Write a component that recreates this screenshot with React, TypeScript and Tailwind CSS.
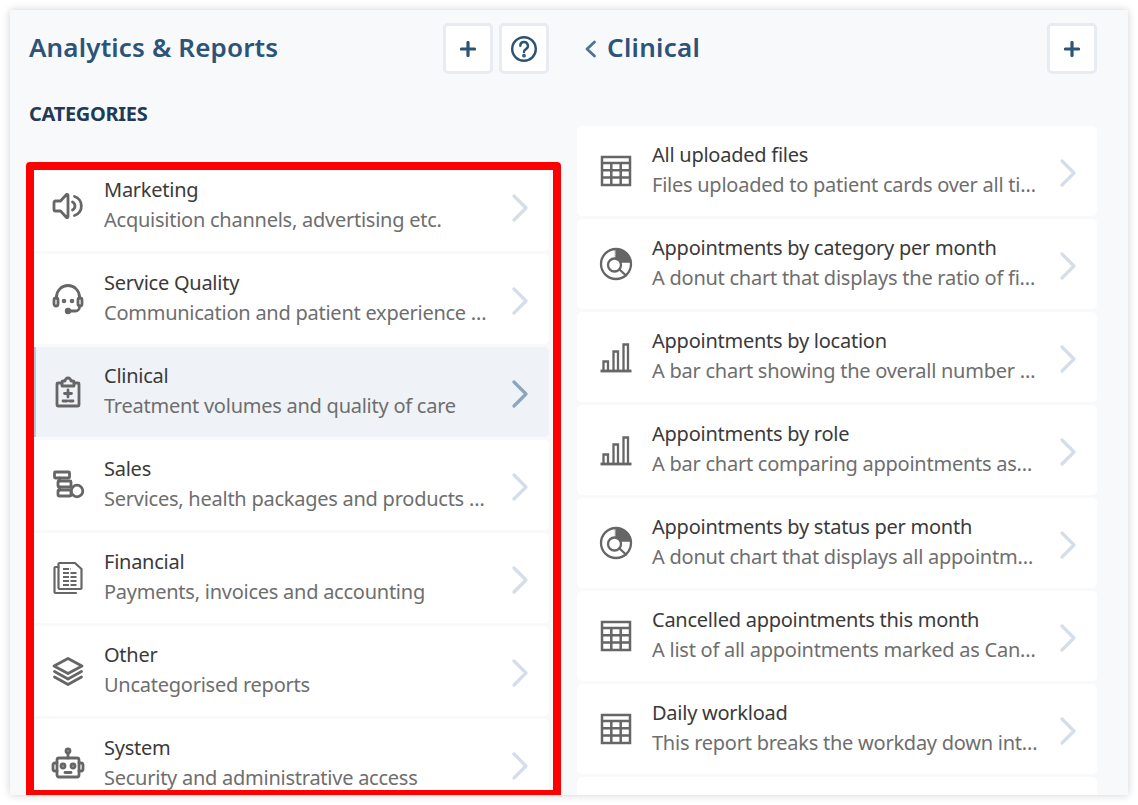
import React from "react";

const S = { fill: "none", stroke: "#666", strokeWidth: 2.8, strokeLinecap: "round" as const, strokeLinejoin: "round" as const };

function Ico({ children }: { children: React.ReactNode }) {
  return (
    <svg width="34" height="34" viewBox="0 0 34 34" {...S}>
      {children}
    </svg>
  );
}

const Speaker = () => (
  <Ico>
    <path d="M3 13.500a1.500 1.500 0 0 1 1.500-1.500H9.500L15.500 5.500a1 1 0 0 1 1.500 .8V27.700a1 1 0 0 1-1.500 .8L9.500 22H4.500A1.500 1.500 0 0 1 3 20.500Z" />
    <path d="M21.500 13a4.500 4.500 0 0 1 0 8" />
    <path d="M23.500 7.500a10 10 0 0 1 0 19" />
  </Ico>
);
const Headset = () => (
  <Ico>
    <path d="M5.500 16V15a11.500 11.500 0 0 1 23 0v1" />
    <rect x="3" y="16" width="4" height="8" rx="2" />
    <rect x="27" y="16" width="4" height="8" rx="2" />
    <path d="M28.500 24v1a4 4 0 0 1-4 4H19" />
    <circle cx="17" cy="29" r="1.800" fill="#666" />
    <circle cx="13" cy="19" r=".9" fill="#666" />
    <circle cx="21" cy="19" r=".9" fill="#666" />
  </Ico>
);
const Clipboard = () => (
  <Ico>
    <path d="M11 8H7a1 1 0 0 0-1 1V30a1 1 0 0 0 1 1H27a1 1 0 0 0 1-1V9a1 1 0 0 0-1-1H23" />
    <path d="M11 11V7a1 1 0 0 1 1-1h2a3 3 0 0 1 6 0h2a1 1 0 0 1 1 1v4Z" />
    <path d="M17 15v7M13.500 18.500h7M12 26h4M18.500 26h3.500" />
  </Ico>
);
const Stack = () => (
  <Ico>
    <rect x="3.500" y="4" width="15" height="6" rx="1" />
    <rect x="7" y="13" width="13" height="6" rx="1" />
    <rect x="7" y="22" width="13" height="6" rx="1" />
    <path d="M8.500 10v3M8.500 19v3" />
    <circle cx="26" cy="23" r="5.800" />
  </Ico>
);
const Docs = () => (
  <Ico>
    <path d="M7.500 6H4.500a1 1 0 0 0-1 1V31a1 1 0 0 0 1 1H25" strokeWidth="2.200" />
    <path d="M7.500 3a1 1 0 0 1 1-1H24l6.500 6V27a1 1 0 0 1-1 1H8.500a1 1 0 0 1-1-1Z" strokeWidth="2.200" />
    <path d="M12 8h8M12 12h14M12 16h14M12 20h14M12 24h14" strokeWidth="2" strokeDasharray="6 1.500" strokeLinecap="butt" />
  </Ico>
);
const Layers = () => (
  <Ico>
    <path d="M17 4.500 31 12 17 19.500 3 12Z" />
    <path d="M3.500 17.500 17 25 30.500 17.500" />
    <path d="M3.500 23 17 30.500 30.500 23" />
  </Ico>
);
const Robot = () => (
  <Ico>
    <circle cx="17" cy="4" r="2" />
    <path d="M17 6v5" />
    <rect x="6" y="11" width="22" height="19" rx="2" />
    <path d="M6 16H4a2 2 0 0 0-2 2v4a2 2 0 0 0 2 2h2M28 16h2a2 2 0 0 1 2 2v4a2 2 0 0 1-2 2h-2" />
    <circle cx="12" cy="19" r="2" />
    <circle cx="22" cy="19" r="2" />
    <path d="M14 25.500h6" />
  </Ico>
);
const Table = () => (
  <Ico>
    <path d="M3 3h28v28H3Z M3 9h28 M3 16.300h28 M3 23.600h28 M12.300 9v22 M21.700 9v22" strokeLinecap="butt" strokeLinejoin="miter" strokeWidth="2.500" />
  </Ico>
);
const Donut = () => (
  <Ico>
    <circle cx="17" cy="17" r="15" strokeWidth="2.300" />
    <circle cx="15.500" cy="18" r="6.500" strokeWidth="2.300" />
    <path d="M16.500 2A15 15 0 0 1 32 15.500H22A7.500 7.500 0 0 0 16.500 11Z" fill="#666" strokeWidth="0.500" />
    <path d="M20.500 22.500 27 28.500" strokeWidth="2.300" />
  </Ico>
);
const Bars = () => (
  <Ico>
    <path d="M1.500 31h31" strokeLinecap="butt" />
    <path d="M4.500 31V21.500h4.500V31M14.500 31V11.500h4.500V31M24.500 31V4.500h4.500V31" strokeWidth="2.300" strokeLinejoin="miter" strokeLinecap="butt" />
  </Ico>
);

function Chevron({ active }: { active?: boolean }) {
  return (
    <svg width="18" height="28" viewBox="0 0 18 28" fill="none" stroke={active ? "#8ea6bd" : "#d5dee8"} strokeWidth="3.200" strokeLinecap="round" strokeLinejoin="round">
      <path d="M3 2l12 12L3 26" />
    </svg>
  );
}

type Item = { title: string; sub: string; icon: React.ReactNode; active?: boolean };

function Row({ title, sub, icon, active }: Item) {
  return (
    <div className={`relative h-[90px] shrink-0 flex items-start rounded-[5px] ${active ? "bg-[#eff3f7]" : "bg-white"}`}>
      {active && <span className="absolute left-[5px] top-0 bottom-0 w-[1.500px] bg-[#b4c8da]" />}
      <div className="w-[75px] shrink-0 h-full flex items-center justify-center pl-[3px] pb-[1px]">{icon}</div>
      <div className="flex-1 min-w-0 pt-[14px] tracking-[-0.25px]">
        <div className="text-[20px] leading-[30px] text-[#3a3a3a] whitespace-nowrap">{title}</div>
        <div className="text-[20px] leading-[30px] text-[#6e6e6e] whitespace-nowrap">{sub}</div>
      </div>
      <div className="w-[58px] shrink-0 h-full flex items-center justify-center pt-[4px] pr-[1px]">
        <Chevron active={active} />
      </div>
    </div>
  );
}

function IconBtn({ children }: { children: React.ReactNode }) {
  return (
    <button className="w-[50px] h-[51px] -mt-px bg-white border-[3px] border-[#e7ebf2] rounded-[5px] flex items-center justify-center">
      {children}
    </button>
  );
}

const Plus = () => (
  <svg width="16" height="16" viewBox="0 0 16 16" stroke="#2c5378" strokeWidth="3.200" strokeLinecap="round">
    <path d="M8 1.500v13M1.500 8h13" />
  </svg>
);

const Help = () => (
  <svg width="28" height="28" viewBox="0 0 28 28" fill="none" stroke="#2c5378" strokeWidth="2.400" strokeLinecap="round">
    <circle cx="14" cy="14" r="11.800" />
    <path d="M10.300 10.800a3.800 3.800 0 1 1 5.600 3.300c-1.300.7-1.900 1.400-1.900 2.900" />
    <circle cx="14" cy="20.700" r=".7" fill="#2c5378" />
  </svg>
);

const left: Item[] = [
  { title: "Marketing", sub: "Acquisition channels, advertising etc.", icon: <Speaker /> },
  { title: "Service Quality", sub: "Communication and patient experience …", icon: <Headset /> },
  { title: "Clinical", sub: "Treatment volumes and quality of care", icon: <Clipboard />, active: true },
  { title: "Sales", sub: "Services, health packages and products …", icon: <Stack /> },
  { title: "Financial", sub: "Payments, invoices and accounting", icon: <Docs /> },
  { title: "Other", sub: "Uncategorised reports", icon: <Layers /> },
  { title: "System", sub: "Security and administrative access", icon: <Robot /> },
];

const right: Item[] = [
  { title: "All uploaded files", sub: "Files uploaded to patient cards over all ti…", icon: <Table /> },
  { title: "Appointments by category per month", sub: "A donut chart that displays the ratio of fi…", icon: <Donut /> },
  { title: "Appointments by location", sub: "A bar chart showing the overall number …", icon: <Bars /> },
  { title: "Appointments by role", sub: "A bar chart comparing appointments as…", icon: <Bars /> },
  { title: "Appointments by status per month", sub: "A donut chart that displays all appointm…", icon: <Donut /> },
  { title: "Cancelled appointments this month", sub: "A list of all appointments marked as Can…", icon: <Table /> },
  { title: "Daily workload", sub: "This report breaks the workday down int…", icon: <Table /> },
  { title: "", sub: "", icon: null },
];

export default function App() {
  return (
    <div className="w-[1138px] h-[805px] bg-white p-[10px] overflow-hidden font-['Noto_Sans',sans-serif]">
      <div className="relative w-[1118px] h-[785px] bg-[#f8f9fb] overflow-hidden shadow-[0_0_8px_rgba(0,0,0,0.18)] flex gap-[28px] pl-[19px]">
        <div className="w-[520px] shrink-0 flex flex-col pt-[14px]">
          <div className="h-[50px] shrink-0 flex items-center justify-between">
            <h1 className="text-[26px] leading-[46px] pb-[4px] font-semibold tracking-[0.15px] text-[#2c5378]">Analytics &amp; Reports</h1>
            <div className="flex gap-[6px]">
              <IconBtn><Plus /></IconBtn>
              <IconBtn><Help /></IconBtn>
            </div>
          </div>
          <div className="mt-[25px] h-[30px] shrink-0 text-[20px] leading-[30px] font-bold tracking-[-0.3px] text-[#1f3b57]">CATEGORIES</div>
          <div className="mt-[32px] flex flex-col gap-[3px]">
            {left.map((r) => <Row key={r.title} {...r} />)}
          </div>
        </div>
        <div className="w-[520px] shrink-0 flex flex-col pt-[14px]">
          <div className="h-[50px] shrink-0 flex items-center justify-between">
            <div className="flex items-center gap-[10px]">
              <svg width="20" height="20" viewBox="0 0 20 20" fill="none" stroke="#4f7395" strokeWidth="2.800" strokeLinecap="round" strokeLinejoin="round">
                <path d="M17.500 3 10 10l7.500 7" />
              </svg>
              <h2 className="text-[26px] leading-[46px] pb-[4px] font-semibold tracking-[0.3px] text-[#2c5378]">Clinical</h2>
            </div>
            <IconBtn><Plus /></IconBtn>
          </div>
          <div className="mt-[52px] flex flex-col gap-[3px]">
            {right.map((r, i) => <Row key={i} {...r} />)}
          </div>
        </div>
        <div className="absolute left-[16px] top-[152px] w-[535px] h-[636px] border-8 border-[#ff0000] rounded-[4px] pointer-events-none" />
      </div>
    </div>
  );
}
